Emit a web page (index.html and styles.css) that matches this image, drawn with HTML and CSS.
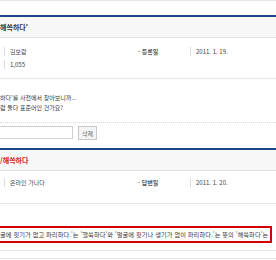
FILE: index.html
```html
<!DOCTYPE html>
<html lang="ko">
<head>
    <meta charset="UTF-8">
    <meta name="viewport" content="width=device-width, initial-scale=1.0">
    <title>온라인 가나다</title>
    <link rel="stylesheet" href="styles.css">
</head>
<body>
<div class="page">
    <div class="topline"></div>

    <div class="board">
        <div class="title">해쓱하다'</div>
        <div class="meta">
            <div class="row">
                <div class="cell"><span class="val">김보람</span></div>
                <div class="label">· 등록일</div>
                <div class="cell"><span class="val">2011. 1. 19.</span></div>
            </div>
            <div class="row">
                <div class="cell"><span class="val">1,055</span></div>
            </div>
        </div>
        <div class="content">
            <p>하다'를 사전에서 찾아보니까...</p>
            <p>럼 둘다 표준어인 건가요?</p>
        </div>
        <div class="comment">
            <div class="input"></div>
            <button class="btn">삭제</button>
        </div>
    </div>

    <div class="board">
        <div class="title red">/해쓱하다</div>
        <div class="meta answer">
            <div class="row">
                <div class="cell"><span class="val">온라인 가나다</span></div>
                <div class="label">· 답변일</div>
                <div class="cell"><span class="val">2011. 1. 20.</span></div>
            </div>
        </div>
        <div class="content answer-body">
            <div class="redbox">굴에 핏기가 없고 파리하다.'는 '핼쑥하다'와 '얼굴에 핏기나 생기가 없이 파리하다.'는 뜻의 '해쓱하다'는</div>
        </div>
        <div class="foot"></div>
    </div>
</div>
</body>
</html>
```

FILE: styles.css
```css
*{
    margin: 0px;
    padding: 0px;
    box-sizing: border-box;
}

body{
    font-family: "Noto Sans CJK KR", "Noto Sans", sans-serif;
    background-color: white;
    color: #444;
    font-size: 6px;
    overflow: hidden;
}

.page {
    width: 276px;
}

.topline {
    height: 15px;
    border-top: 1px solid #e6e6e6;
}

.board {
    border-top: 2px solid #1c4587;
}

.title {
    height: 21px;
    line-height: 20px;
    background-color: #f7f7f7;
    border-bottom: 1px solid #e2e2e2;
    font-size: 7px;
    font-weight: bold;
    color: #333;
    white-space: nowrap;
}

.title.red {
    color: #d21a1a;
}

.meta {
    padding: 7px 0 7px 4px;
    border-bottom: 1px solid #e6e6e6;
}

.meta.answer {
    padding: 5px 0 14px 4px;
}

.row {
    display: flex;
    height: 13px;
    align-items: center;
}

.cell {
    width: 134px;
}

.cell:last-child {
    width: auto;
}

.val {
    display: inline-block;
    border-left: 1px solid #dcdcdc;
    padding-left: 5px;
    line-height: 9px;
    white-space: nowrap;
}

.label {
    width: 52px;
    font-weight: bold;
    color: #555;
    white-space: nowrap;
}

.content {
    padding: 14px 0 9px 0;
    border-bottom: 1px dotted #d8d8d8;
    line-height: 10px;
    color: #333;
}

.comment {
    display: flex;
    align-items: flex-start;
    gap: 5px;
    padding: 3px 0 8px 0;
}

.input {
    width: 73px;
    height: 13px;
    border: 1px solid #cfcfcf;
    border-left: none;
}

.btn {
    width: 19px;
    height: 14px;
    font-family: inherit;
    font-size: 6px;
    color: #666;
    background: #f4f4f4;
    border: 1px solid #c8c8c8;
}

.answer-body {
    padding: 22px 4px 7px 0;
    border-bottom: 1px solid #e6e6e6;
}

.redbox {
    border: 2px solid #d40000;
    border-left: none;
    height: 17px;
    line-height: 13px;
    font-size: 6.2px;
    letter-spacing: 0.1px;
    white-space: nowrap;
    overflow: hidden;
    color: #333;
}

.foot {
    height: 8px;
    border-bottom: 1px solid #e6e6e6;
}
```
